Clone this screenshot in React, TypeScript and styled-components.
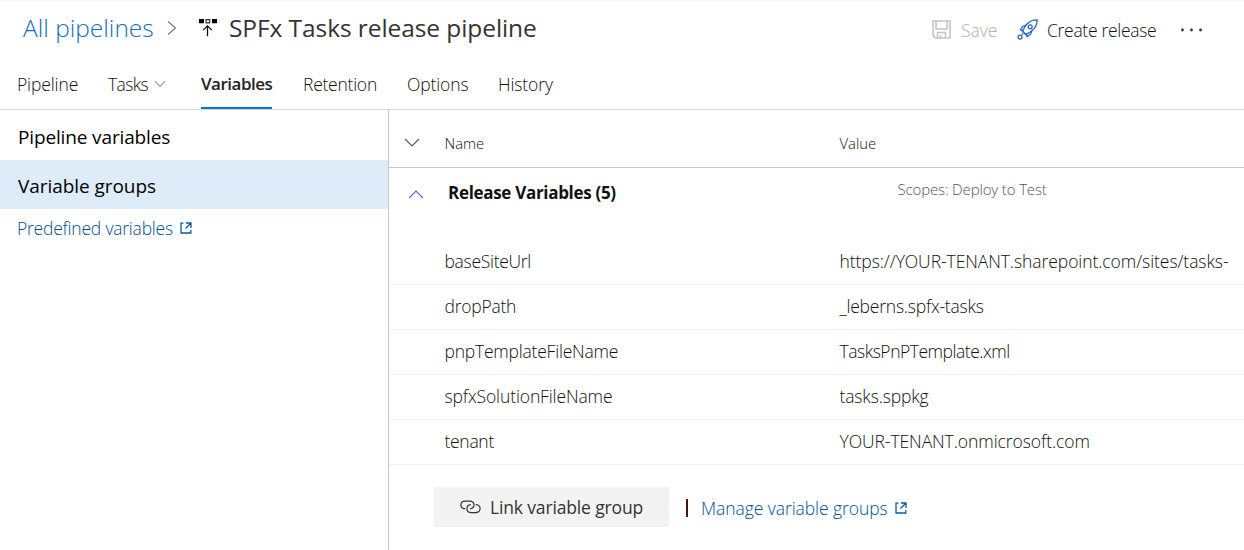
import React from "react";
import styled, { createGlobalStyle } from "styled-components";

const GlobalStyle = createGlobalStyle`
  * { box-sizing: border-box; }
  body {
    margin: 0;
    background: #fff;
    color: #111;
    font-family: "Open Sans", "Noto Sans", sans-serif;
    font-weight: 300;
    overflow: hidden;
  }
  svg { flex: none; }
`;

const Label = styled.span<{ $track?: number }>`
  letter-spacing: ${(p) => p.$track ?? 0}px;
  white-space: nowrap;
`;

const Page = styled.div`
  display: flex;
  flex-direction: column;
  width: 1244px;
  height: 550px;
  border-top: 1px solid #f8f8f8;
`;

const Header = styled.header`
  display: flex;
  justify-content: space-between;
  height: 59px;
  padding: 0 41px 0 23px;
`;

const Breadcrumb = styled.div`
  display: flex;
  align-items: center;
  height: 54px;
  font-size: 24.5px;
  line-height: 32px;
`;

const RootLink = styled.a`
  width: 144px;
  color: #106ebe;
`;

const CrumbIcon = styled.span<{ $w: number }>`
  display: flex;
  width: ${(p) => p.$w}px;
`;

const Title = styled.h1`
  margin: 0;
  font-size: 24.5px;
  font-weight: 400;
  color: #333;
`;

const Commands = styled.div`
  display: flex;
  align-items: center;
  height: 57px;
  font-size: 17.5px;
  line-height: 24px;
`;

const Command = styled.button<{ $w: number; $gap: number; $disabled?: boolean }>`
  display: flex;
  align-items: center;
  gap: ${(p) => p.$gap}px;
  width: ${(p) => p.$w}px;
  padding: 0;
  border: 0;
  background: none;
  font: inherit;
  color: ${(p) => (p.$disabled ? "#b0b0b0" : "#111")};
`;

const Tabs = styled.nav`
  display: flex;
  height: 50px;
  padding-left: 17px;
  border-bottom: 1px solid #d6d6d6;
  font-size: 17.5px;
  line-height: 24px;
`;

const Tab = styled.div<{ $w: number; $gap: number; $active?: boolean }>`
  display: flex;
  align-items: center;
  gap: 6px;
  width: ${(p) => p.$w}px;
  margin-right: ${(p) => p.$gap}px;
  color: ${(p) => (p.$active ? "#222" : "#111")};
  font-size: ${(p) => (p.$active ? 17 : 17.5)}px;
  font-weight: ${(p) => (p.$active ? 600 : 300)};
  border-bottom: 2px solid ${(p) => (p.$active ? "#0078d4" : "transparent")};
`;

const Body = styled.div`
  display: flex;
  flex: 1;
`;

const Sidebar = styled.aside`
  width: 389px;
  border-right: 1px solid #c8c8c8;
`;

const SideItem = styled.div<{ $selected?: boolean; $h: number }>`
  display: flex;
  align-items: center;
  height: ${(p) => p.$h}px;
  padding: 3px 18px 0;
  color: #000;
  font-size: 19px;
  font-weight: 400;
  background: ${(p) => (p.$selected ? "#deecf9" : "transparent")};
`;

const ExternalLink = styled.a`
  display: flex;
  align-items: center;
  gap: 7px;
  color: #00508f;
  font-size: 17.5px;
  line-height: 24px;
`;

const SideLink = styled.div`
  padding: 7px 17px;
`;

const Main = styled.main`
  flex: 1;
  min-width: 0;
`;

const GridHead = styled.div`
  display: grid;
  grid-template-columns: 55.5px 395px 1fr;
  align-items: center;
  height: 58px;
  padding-top: 9px;
  border-bottom: 1px solid #c8c8c8;
  font-size: 14.8px;
`;

const HeadChevron = styled.span`
  display: flex;
  padding: 0 0 2px 15px;
`;

const GroupRow = styled.div`
  display: grid;
  grid-template-columns: 59px 449.5px 1fr;
  height: 72px;
  padding-top: 14px;
  line-height: 22px;
`;

const GroupChevron = styled.span`
  display: flex;
  padding: 8px 0 0 19px;
`;

const GroupName = styled.strong`
  color: #111;
  font-size: 17px;
  font-weight: 700;
`;

const Scopes = styled.span`
  margin-top: -4px;
  color: #555;
  font-size: 15px;
`;

const Row = styled.div`
  display: grid;
  grid-template-columns: 395px 1fr;
  align-items: center;
  height: 45px;
  padding: 0 0 3px 55.5px;
  border-bottom: 1px solid #f1f1f1;
  font-size: 17.5px;
  line-height: 24px;
`;

const Footer = styled.div`
  display: flex;
  align-items: center;
  padding: 22px 0 0 45px;
`;

const LinkButton = styled.button`
  display: flex;
  align-items: center;
  gap: 9px;
  width: 235px;
  height: 40px;
  padding: 0 0 0 26px;
  border: 0;
  background: #f3f3f3;
  color: #333;
  font: 500 17.5px "Open Sans", "Noto Sans", sans-serif;
`;

const Divider = styled.span`
  width: 2px;
  height: 18px;
  margin: 2px 13px 0 17px;
  background: #4a1208;
`;

const FooterLink = styled.div`
  padding-top: 2px;
`;

const Chevron = ({ w, h, d, color }: { w: number; h: number; d: string; color: string }) => (
  <svg width={w} height={h} viewBox={`0 0 ${w} ${h}`} fill="none" stroke={color} strokeWidth="1.1">
    <path d={d} />
  </svg>
);

const PipelineIcon = () => (
  <svg width="20" height="20" viewBox="0 0 20 20">
    <path d="M1 1h5v4.300H1zM14 1h5v4.300h-5z" fill="#000" />
    <path d="M8.100 1.600h3.600v3.200H8.100z" fill="#fff" stroke="#333" strokeWidth="1.200" />
    <path d="M9.500 18.200V8M5.200 12.100l4.300-4.200 4.300 4.200" fill="none" stroke="#111" strokeWidth="1.300" />
  </svg>
);

const SaveIcon = () => (
  <svg width="19" height="19" viewBox="0 0 19 19" fill="none" stroke="#c4c4c8" strokeWidth="1.6">
    <path d="M1 1h17v17H3.500L1 15.500zM4 1v8h11V1M5.500 18v-5.500h8V18M8.500 18v-3" />
  </svg>
);

const RocketIcon = () => (
  <svg width="21" height="21" viewBox="0 0 21 21" fill="none" stroke="#2564bd" strokeWidth="1.25" strokeLinejoin="round">
    <path d="M20.200.8C15.500.8 12 2.600 9.500 5.500 7.800 7.600 6.500 10 5.600 12.400l3 3c2.600-.9 4.900-2.200 6.900-4.100C18.500 8.700 20.200 5.300 20.200.8z" />
    <circle cx="13.200" cy="7.800" r="2" />
    <path d="M9 6.200 5.600 7.500 3.200 11l3 .2M14.800 12l-1.400 3.400L10 17.800l-.2-3M4.500 11.200l5.300 5.300M6 14.500l-1.200 1.200" />
    <circle cx="3" cy="18" r="2" />
  </svg>
);

const MoreIcon = () => (
  <svg width="23" height="4" viewBox="0 0 23 4" fill="#333">
    <circle cx="2.500" cy="2" r="1.400" />
    <circle cx="11.500" cy="2" r="1.400" />
    <circle cx="20.500" cy="2" r="1.400" />
  </svg>
);

const OpenIcon = () => (
  <svg width="12" height="12" viewBox="0 0 12 12" fill="none" stroke="#0b5a9d" strokeWidth="1.300">
    <path d="M3.500 1.200H1v9.800h9.800V8M6 1h5v5M11 1 5.500 6.500" />
  </svg>
);

const ChainIcon = () => (
  <svg width="21" height="14" viewBox="0 0 21 14" fill="none" stroke="#333" strokeWidth="1.250">
    <path d="M5.300 8.700C2.800 8.700.8 7.200.8 4.900S2.800 1 5.300 1h4.400c2.400 0 4.300 1.600 4.300 3.800 0 2.100-1.700 3.700-3.800 3.900" />
    <path d="M15.700 4.700c2.400 0 4.400 1.600 4.400 3.900s-2 3.900-4.400 3.900h-4.400C8.800 12.500 7 11 7 8.700c0-2.100 1.600-3.800 3.800-4" />
  </svg>
);

const variables: { name: string; nt: number; value: string; vt: number }[] = [
  { name: "baseSiteUrl", nt: -0.3, value: "https://YOUR-TENANT.sharepoint.com/sites/tasks-", vt: -0.07 },
  { name: "dropPath", nt: -0.25, value: "_leberns.spfx-tasks", vt: -0.22 },
  { name: "pnpTemplateFileName", nt: -0.22, value: "TasksPnPTemplate.xml", vt: -0.47 },
  { name: "spfxSolutionFileName", nt: -0.12, value: "tasks.sppkg", vt: -0.15 },
  { name: "tenant", nt: -0.3, value: "YOUR-TENANT.onmicrosoft.com", vt: -0.07 },
];

export default function App() {
  return (
    <>
      <GlobalStyle />
      <Page>
        <Header>
          <Breadcrumb>
            <RootLink><Label>All pipelines</Label></RootLink>
            <CrumbIcon $w={31}><Chevron w={10} h={16} d="M1 1.500 8.500 8 1 14.500" color="#777" /></CrumbIcon>
            <CrumbIcon $w={31}><PipelineIcon /></CrumbIcon>
            <Title><Label $track={-0.08}>SPFx Tasks release pipeline</Label></Title>
          </Breadcrumb>
          <Commands>
            <Command $w={85} $gap={10} $disabled><SaveIcon /><Label>Save</Label></Command>
            <Command $w={163} $gap={9}><RocketIcon /><Label $track={-0.3}>Create release</Label></Command>
            <MoreIcon />
          </Commands>
        </Header>
        <Tabs>
          <Tab $w={61} $gap={30}><Label $track={-0.12}>Pipeline</Label></Tab>
          <Tab $w={58} $gap={35}><Label $track={-0.65}>Tasks</Label><Chevron w={12} h={8} d="M1 1 6 6.500 11 1" color="#888" /></Tab>
          <Tab $w={71} $gap={31} $active><Label $track={-0.5}>Variables</Label></Tab>
          <Tab $w={74} $gap={30}><Label $track={-0.25}>Retention</Label></Tab>
          <Tab $w={61} $gap={30}><Label $track={-0.12}>Options</Label></Tab>
          <Tab $w={55} $gap={0}><Label $track={-0.12}>History</Label></Tab>
        </Tabs>
        <Body>
          <Sidebar>
            <SideItem $h={50}><Label $track={-0.14}>Pipeline variables</Label></SideItem>
            <SideItem $h={49} $selected><Label $track={-0.06}>Variable groups</Label></SideItem>
            <SideLink><ExternalLink><Label $track={-0.22}>Predefined variables</Label><OpenIcon /></ExternalLink></SideLink>
          </Sidebar>
          <Main>
            <GridHead>
              <HeadChevron><Chevron w={16} h={9} d="M1 1 8 8 15 1" color="#555" /></HeadChevron>
              <Label>Name</Label>
              <Label>Value</Label>
            </GridHead>
            <GroupRow>
              <GroupChevron><Chevron w={16} h={9} d="M1 8 8 1 15 8" color="#4b6fc0" /></GroupChevron>
              <GroupName><Label $track={-0.31}>Release Variables (5)</Label></GroupName>
              <Scopes><Label $track={-0.14}>Scopes: Deploy to Test</Label></Scopes>
            </GroupRow>
            {variables.map((v) => (
              <Row key={v.name}>
                <Label $track={v.nt}>{v.name}</Label>
                <Label $track={v.vt}>{v.value}</Label>
              </Row>
            ))}
            <Footer>
              <LinkButton><ChainIcon /><Label $track={-0.15}>Link variable group</Label></LinkButton>
              <Divider />
              <FooterLink><ExternalLink><Label $track={-0.07}>Manage variable groups</Label><OpenIcon /></ExternalLink></FooterLink>
            </Footer>
          </Main>
        </Body>
      </Page>
    </>
  );
}
